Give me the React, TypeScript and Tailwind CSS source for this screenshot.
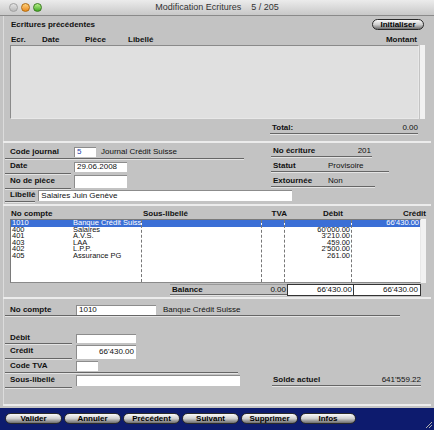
import React from "react";

const line = "border-b border-[#666] shadow-[0_1px_0_#e4e4e4]";

function Input({ w, h, children, right, blue }: { w: string; h: string; children?: React.ReactNode; right?: boolean; blue?: boolean }) {
  return (
    <div
      className={`${w} ${h} bg-white border-t border-l border-[#8c8c8c] flex items-center px-[2px] ${right ? "justify-end" : ""} ${blue ? "text-[#1f3fa8]" : ""} whitespace-nowrap overflow-hidden`}
    >
      {children}
    </div>
  );
}

function Label({ children, w = "w-[65px]" }: { children: React.ReactNode; w?: string }) {
  return <div className={`${w} h-full pl-[5px] font-bold flex items-center ${line}`}>{children}</div>;
}

function Pill({ children, w }: { children: React.ReactNode; w: string }) {
  return (
    <div
      className={`${w} h-[11px] rounded-full border border-[#2a2a2a] bg-gradient-to-b from-[#fafafa] via-[#cfcfcf] to-[#6f6f6f] flex items-center justify-center font-bold text-[8px] text-black`}
    >
      {children}
    </div>
  );
}

const rows = [
  { c: "1010", l: "Banque Crédit Suisse", d: "", k: "66'430.00", sel: true },
  { c: "400", l: "Salaires", d: "60'000.00", k: "" },
  { c: "401", l: "A.V.S.", d: "3'210.00", k: "" },
  { c: "403", l: "LAA", d: "459.00", k: "" },
  { c: "402", l: "L.P.P.", d: "2'500.00", k: "" },
  { c: "405", l: "Assurance PG", d: "261.00", k: "" },
];

export default function App() {
  return (
    <div className="w-[434px] h-[430px] bg-[#c3c3c3] flex flex-col overflow-hidden text-[8px] leading-none text-[#111] font-['Liberation_Sans',Arial,sans-serif] relative">
      {/* Title bar */}
      <div className="h-[16px] shrink-0 bg-gradient-to-b from-[#ececec] to-[#c8c8c8] border-b border-[#8a8a8a] flex items-center relative">
        <div className="flex items-center gap-[2px] pl-[9px]">
          <div className="w-[9px] h-[9px] rounded-full bg-gradient-to-b from-[#e4e4e4] to-[#b8b8b8] border border-[#a0a0a0]" />
          <div className="w-[9px] h-[9px] rounded-full bg-gradient-to-b from-[#ffd27a] to-[#e88a10] border border-[#b06a10] ml-[1px]" />
          <div className="w-[9px] h-[9px] rounded-full bg-gradient-to-b from-[#b8f28a] to-[#3ea820] border border-[#3a7a20] ml-[1px]" />
        </div>
        <div className="absolute left-0 right-0 top-[3px] text-center text-[9px] text-[#333] whitespace-pre">Modification Ecritures    5 / 205</div>
      </div>

      <div className="flex-1 flex flex-col px-[3px]">
        {/* Panel 1 */}
        <div className="h-[125px] shrink-0 border-l border-[#dcdcdc] flex flex-col">
          <div className="mt-[3px] h-[11px] flex items-center justify-between pl-[7px] pr-[7px]">
            <div className="font-bold">Ecritures précédentes</div>
            <Pill w="w-[52px]">Initialiser</Pill>
          </div>
          <div className="mt-[6px] h-[8px] flex items-center font-bold pl-[7px] pr-[14px]">
            <div className="w-[31px]">Ecr.</div>
            <div className="w-[43px]">Date</div>
            <div className="w-[43px]">Pièce</div>
            <div className="flex-1">Libellé</div>
            <div>Montant</div>
          </div>
          <div className="mt-[1px] h-[74px] flex">
            <div className="ml-[6px] w-[409px] h-full bg-[#e0e0e0] border border-[#8a8a8a] border-r-[#e8e8e8] border-b-[#e8e8e8]" />
            <div className="ml-[1px] w-[5px] h-full bg-[#f2f2f2]" />
          </div>
          <div className="mt-[3px] h-[12px] ml-[266px] w-[150px] flex items-center justify-between pr-[2px]">
            <div className={`flex-1 h-full flex items-center justify-between ${line}`}>
              <span className="font-bold pl-[2px]">Total:</span>
              <span>0.00</span>
            </div>
          </div>
        </div>

        <div className="h-[2px] shrink-0 bg-[#ececec]" />

        {/* Panel 2 */}
        <div className="h-[61px] shrink-0 border-l border-[#dcdcdc] flex">
          <div className="w-[267px] flex flex-col pl-[1px]">
            <div className={`mt-[2px] h-[14px] w-[239px] flex items-center ${line}`}>
              <div className="w-[69px] pl-[5px] font-bold">Code journal</div>
              <Input w="w-[22px]" h="h-[10px]" blue>5</Input>
              <div className="ml-[5px]">Journal Crédit Suisse</div>
            </div>
            <div className="h-[15px] flex items-center">
              <Label w="w-[66px]">Date</Label>
              <div className="ml-[3px]"><Input w="w-[53px]" h="h-[10px]">29.06.2008</Input></div>
            </div>
            <div className="h-[15px] flex items-center">
              <Label w="w-[66px]">No de pièce</Label>
              <div className="ml-[3px] self-end mb-[1px]"><Input w="w-[53px]" h="h-[13px]" /></div>
            </div>
            <div className="h-[13px] flex items-center">
              <Label w="w-[66px]">Libellé</Label>
              <div className="ml-[3px]"><Input w="w-[254px]" h="h-[11px]">Salaires Juin Genève</Input></div>
            </div>
          </div>
          <div className="flex flex-col">
            <div className={`mt-[3px] h-[11px] w-[101px] flex items-center justify-between pr-[1px] ${line}`}>
              <span className="font-bold pl-[2px]">No écriture</span>
              <span>201</span>
            </div>
            <div className={`mt-[4px] h-[11px] w-[118px] flex items-center ${line}`}>
              <span className="font-bold pl-[2px] w-[57px]">Statut</span>
              <span>Provisoire</span>
            </div>
            <div className={`mt-[4px] h-[11px] w-[104px] flex items-center ${line}`}>
              <span className="font-bold pl-[2px] w-[57px]">Extournée</span>
              <span>Non</span>
            </div>
          </div>
        </div>

        <div className="h-[2px] shrink-0 bg-[#ececec]" />

        {/* Panel 3 */}
        <div className="h-[91px] shrink-0 border-l border-[#dcdcdc] flex flex-col">
          <div className="mt-[4px] h-[8px] flex items-center font-bold pl-[7px]">
            <div className="w-[132px]">No compte</div>
            <div className="w-[121px]">Sous-libellé</div>
            <div className="w-[23px] text-right">TVA</div>
            <div className="w-[56px] text-right">Débit</div>
            <div className="w-[83px] text-right">Crédit</div>
          </div>
          <div className="mt-[1px] h-[64px] flex">
            <div className="ml-[6px] w-[411px] h-full bg-white border border-[#7a7a7a] border-r-[#e8e8e8] border-b-[#8a8a8a] flex text-[7.5px]">
              <div className="w-[131px] shrink-0 h-full border-r border-dashed border-[#777] overflow-hidden">
                {rows.map((r, i) => (
                  <div key={i} className={`h-[6.6px] leading-[6.6px] flex whitespace-nowrap ${r.sel ? "bg-[#3b6fd6] text-white" : ""}`}>
                    <span className="w-[62px] shrink-0 pl-[1px]">{r.c}</span>
                    <span className="shrink-0">{r.l}</span>
                  </div>
                ))}
              </div>
              <div className="w-[120px] shrink-0 h-full border-r border-dashed border-[#777]">
                <div className="h-[6.6px] bg-[#3b6fd6]" />
              </div>
              <div className="w-[23px] shrink-0 h-full border-r border-dashed border-[#777]">
                <div className="h-[6.6px] bg-[#3b6fd6]" />
              </div>
              <div className="w-[67px] shrink-0 h-full border-r border-dashed border-[#777]">
                {rows.map((r, i) => (
                  <div key={i} className={`h-[6.6px] leading-[6.6px] text-right pr-[1px] ${r.sel ? "bg-[#3b6fd6] text-white" : ""}`}>{r.d}</div>
                ))}
              </div>
              <div className="flex-1 h-full">
                {rows.map((r, i) => (
                  <div key={i} className={`h-[6.6px] leading-[6.6px] text-right pr-[1px] ${r.sel ? "bg-[#3b6fd6] text-white" : ""}`}>{r.k}</div>
                ))}
              </div>
            </div>
            <div className="w-[5px] h-full bg-[#f2f2f2]" />
          </div>
          <div className="mt-[1px] h-[13px] flex ml-[166px]">
            <div className={`w-[117px] h-[11px] flex items-center justify-between pr-[1px] ${line} border-t border-t-[#999]`}>
              <span className="font-bold pl-[2px]">Balance</span>
              <span>0.00</span>
            </div>
            <div className="w-[134px] h-[12px] bg-white border border-[#333] flex">
              <div className="w-[66px] h-full border-r border-[#333] text-right pr-[1px] flex items-center justify-end">66'430.00</div>
              <div className="flex-1 h-full text-right pr-[2px] flex items-center justify-end">66'430.00</div>
            </div>
          </div>
        </div>

        <div className="h-[2px] shrink-0 bg-[#ececec]" />

        {/* Panel 4 */}
        <div className="h-[105px] shrink-0 border-l border-[#dcdcdc] flex flex-col pl-[1px]">
          <div className={`mt-[5px] h-[12px] w-[395px] flex items-center ${line}`}>
            <div className="w-[71px] pl-[5px] font-bold">No compte</div>
            <Input w="w-[80px]" h="h-[10px]">1010</Input>
            <div className="ml-[7px]">Banque Crédit Suisse</div>
          </div>
          <div className="mt-[16px] h-[12px] flex items-center">
            <Label w="w-[67px]">Débit</Label>
            <div className="ml-[4px]"><Input w="w-[60px]" h="h-[9px]" /></div>
          </div>
          <div className="h-[15px] flex items-center">
            <Label w="w-[67px]">Crédit</Label>
            <div className="ml-[4px]"><Input w="w-[60px]" h="h-[14px]" right>66'430.00</Input></div>
          </div>
          <div className={`h-[14px] w-[233px] flex items-center ${line}`}>
            <div className="w-[71px] pl-[5px] font-bold">Code TVA</div>
            <Input w="w-[22px]" h="h-[10px]" />
          </div>
          <div className="h-[15px] flex items-center">
            <Label w="w-[67px]">Sous-libellé</Label>
            <div className="ml-[4px]"><Input w="w-[164px]" h="h-[11px]" /></div>
            <div className={`ml-[32px] w-[149px] h-[11px] flex items-center justify-between ${line}`}>
              <span className="font-bold pl-[1px]">Solde actuel</span>
              <span>641'559.22</span>
            </div>
          </div>
        </div>

        <div className="h-[2px] shrink-0 bg-[#ececec]" />
      </div>

      {/* Bottom bar */}
      <div className="h-[22px] shrink-0 bg-[#0d1b6e] flex items-start pt-[5px] pl-[5px] gap-[2px] relative">
        <Pill w="w-[57px]">Valider</Pill>
        <Pill w="w-[57px]">Annuler</Pill>
        <Pill w="w-[57px]">Précédent</Pill>
        <Pill w="w-[57px]">Suivant</Pill>
        <Pill w="w-[57px]">Supprimer</Pill>
        <Pill w="w-[56px]">Infos</Pill>
        <svg className="absolute right-[1px] bottom-[1px]" width="9" height="9" viewBox="0 0 9 9">
          <path d="M8 2 L2 8 M8 5 L5 8" stroke="#b0b0b0" strokeWidth="1" />
        </svg>
      </div>
    </div>
  );
}
